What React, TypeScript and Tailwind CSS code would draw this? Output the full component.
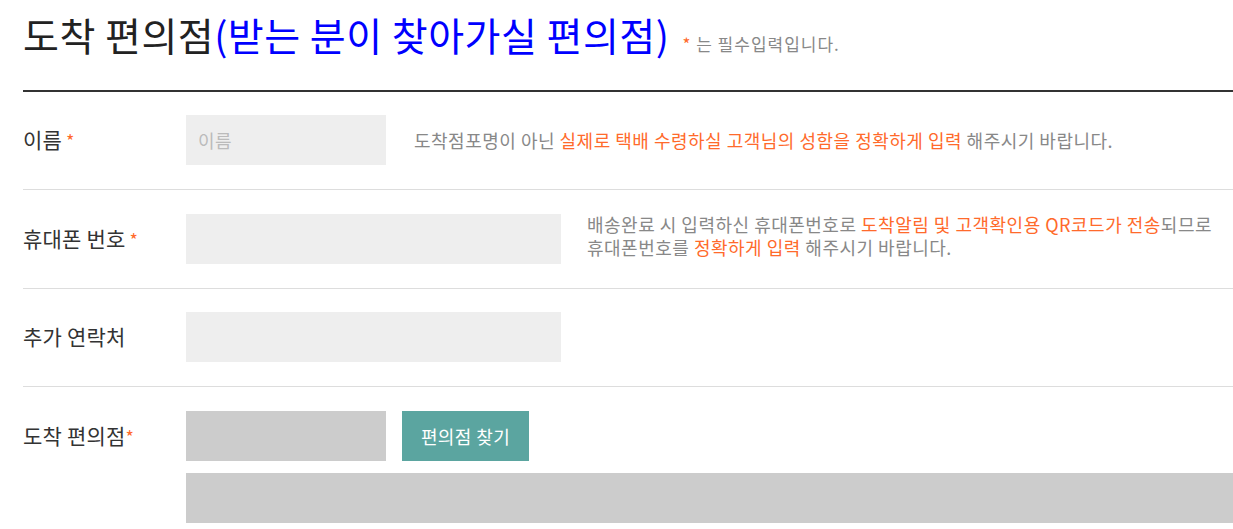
import React from 'react';

const font = { fontFamily: '"Noto Sans CJK KR", "Noto Sans", sans-serif' };

const Req = ({ tight = false }: { tight?: boolean }) => (
  <span className={`text-[#ff6a2b] text-[18px] ${tight ? '' : 'ml-[4px]'}`}>*</span>
);

const Hl = ({ children }: { children: React.ReactNode }) => (
  <span className="text-[#ff6a2b]">{children}</span>
);

export default function App() {
  return (
    <div className="bg-white min-h-screen pl-[23px] overflow-hidden" style={font}>
      {/* Title */}
      <div className="h-[90px] flex items-baseline pt-[7px]">
        <h2 className="text-[39px] leading-[54px] text-[#222] tracking-[0.5px] whitespace-nowrap">
          도착 편의점<span className="text-[#0000ff]">(받는 분이 찾아가실 편의점)</span>
        </h2>
        <span className="ml-[13px] text-[17px] tracking-[1px] text-[#888] whitespace-nowrap">
          <span className="text-[#ff6a2b]">*</span> 는 필수입력입니다.
        </span>
      </div>

      <div className="border-t-2 border-[#333]">
        {/* 이름 */}
        <div className="flex items-center pt-[23px] pb-[24px] border-b border-[#dddddd]">
          <div className="w-[163px] text-[21px] tracking-[0.2px] text-[#333] flex items-center">
            이름<Req />
          </div>
          <input
            className="w-[200px] h-[50px] bg-[#eeeeee] px-[12px] text-[18px] tracking-[0.5px] text-[#333] placeholder:text-[#bbbbbb] outline-none"
            placeholder="이름"
          />
          <p className="ml-[28px] text-[18px] tracking-[0.5px] text-[#888] leading-[23px] whitespace-nowrap">
            도착점포명이 아닌 <Hl>실제로 택배 수령하실 고객님의 성함을 정확하게 입력</Hl> 해주시기 바랍니다.
          </p>
        </div>

        {/* 휴대폰 번호 */}
        <div className="flex items-center py-[24px] border-b border-[#dddddd]">
          <div className="w-[163px] text-[21px] tracking-[0.2px] text-[#333] flex items-center">
            휴대폰 번호<Req />
          </div>
          <input className="w-[375px] h-[50px] bg-[#eeeeee] px-[12px] text-[18px] outline-none" />
          <p className="ml-[26px] flex-1 text-[18px] tracking-[0.5px] text-[#888] leading-[23px] -mt-[6px]">
            배송완료 시 입력하신 휴대폰번호로 <Hl>도착알림 및 고객확인용 QR코드가 전송</Hl>되므로
            <br />
            휴대폰번호를 <Hl>정확하게 입력</Hl> 해주시기 바랍니다.
          </p>
        </div>

        {/* 추가 연락처 */}
        <div className="flex items-center pt-[23px] pb-[24px] border-b border-[#dddddd]">
          <div className="w-[163px] text-[21px] tracking-[0.2px] text-[#333]">추가 연락처</div>
          <input className="w-[375px] h-[50px] bg-[#eeeeee] px-[12px] text-[18px] outline-none" />
        </div>

        {/* 도착 편의점 */}
        <div className="flex pt-[24px]">
          <div className="w-[163px] h-[50px] text-[21px] tracking-[0.2px] text-[#333] flex items-center">
            도착 편의점<Req tight />
          </div>
          <div className="flex-1 flex flex-col gap-[12px]">
            <div className="flex gap-[16px]">
              <div className="w-[200px] h-[50px] bg-[#cccccc]" />
              <button className="w-[127px] h-[50px] bg-[#5ba5a0] text-white text-[18px] tracking-[0.4px]">
                편의점 찾기
              </button>
            </div>
            <div className="h-[50px] bg-[#cccccc]" />
          </div>
        </div>
      </div>
    </div>
  );
}
